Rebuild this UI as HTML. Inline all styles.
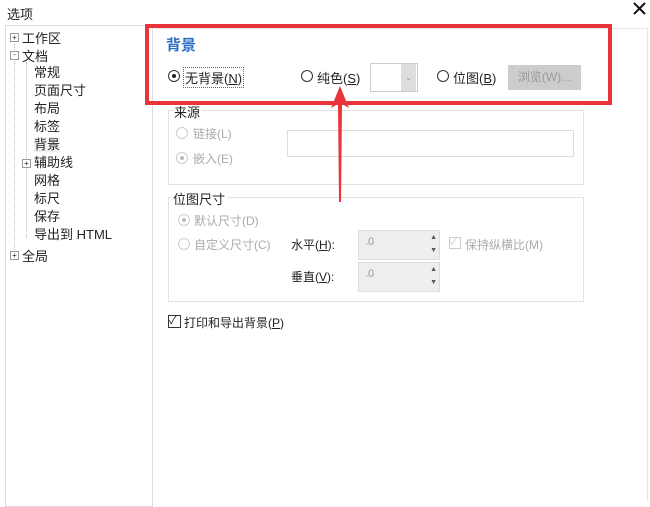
<!DOCTYPE html><html><head><meta charset="utf-8"><style>
body{margin:0;width:650px;height:500px;background:#fff;position:relative;overflow:hidden;font-family:"Liberation Sans","Noto Sans CJK SC",sans-serif;font-size:12px;color:#222}
.a{position:absolute;white-space:nowrap}
.g{color:#aaa}
.rb{position:absolute;width:10px;height:10px;border:1px solid #333;border-radius:50%;background:#fff}
.rb.d{border-color:#ccc}
.dot{position:absolute;left:3px;top:3px;width:4px;height:4px;border-radius:50%;background:#222}
.box{position:absolute;border:1px solid #e2e2e2}
.u{text-decoration:underline}
</style></head><body>
<div class="a" style="left:7px;top:4px;font-size:13px">选项</div>
<svg class="a" style="left:633px;top:2px" width="13" height="13"><path d="M1 1L12 12M12 1L1 12" stroke="#111" stroke-width="2"/></svg>
<div class="box" style="left:5px;top:25px;width:146px;height:480px;border-color:#ddd"></div>
<div class="a" style="left:152px;top:28px;width:1px;height:472px;background:#ddd"></div>
<div class="a" style="left:157px;top:28px;width:490px;height:1px;background:#e5e5e5"></div>
<div class="a" style="left:647px;top:28px;width:1px;height:472px;background:#e5e5e5"></div>
<!-- tree -->
<div class="a" style="left:14px;top:44px;width:1px;height:210px;border-left:1px dotted #bbb"></div>
<div class="a" style="left:26px;top:62px;width:1px;height:176px;border-left:1px dotted #bbb"></div>
<div class="a" style="left:10px;top:33px;width:7px;height:7px;border:1px solid #999;font-size:8px;line-height:7px;text-align:center;background:#fff">+</div>
<div class="a" style="left:22px;top:28px;font-size:13px">工作区</div>
<div class="a" style="left:10px;top:51px;width:7px;height:7px;border:1px solid #999;font-size:8px;line-height:6px;text-align:center;background:#fff">-</div>
<div class="a" style="left:22px;top:46px;font-size:13px">文档</div>
<div class="a" style="left:34px;top:64px;font-size:13px;line-height:18px">常规<br>页面尺寸<br>布局<br>标签<br><span style="background:#f0f0f0">背景</span><br>辅助线<br>网格<br>标尺<br>保存<br>导出到 HTML</div>
<div class="a" style="left:22px;top:159px;width:7px;height:7px;border:1px solid #999;font-size:8px;line-height:7px;text-align:center;background:#fff">+</div>
<div class="a" style="left:10px;top:251px;width:7px;height:7px;border:1px solid #999;font-size:8px;line-height:7px;text-align:center;background:#fff">+</div>
<div class="a" style="left:22px;top:246px;font-size:13px">全局</div>
<!-- header -->
<div class="a" style="left:166px;top:34px;font-size:15px;color:#2a6cc0;font-weight:bold">背景</div>
<div class="rb" style="left:168px;top:70px"><div class="dot"></div></div>
<div class="a" style="left:183px;top:67px;font-size:13px;border:1px dotted #666;padding:0 1px">无背景(<span class="u">N</span>)</div>
<div class="rb" style="left:301px;top:70px"></div>
<div class="a" style="left:317px;top:68px;font-size:13px">纯色(<span class="u">S</span>)</div>
<div class="a" style="left:370px;top:63px;width:46px;height:27px;border:1px solid #ccc;background:#fff"></div>
<div class="a" style="left:401px;top:64px;width:15px;height:27px;background:#ddd;color:#999;font-size:8px;text-align:center;line-height:27px">⌄</div>
<div class="rb" style="left:437px;top:70px"></div>
<div class="a" style="left:453px;top:68px;font-size:13px">位图(<span class="u">B</span>)</div>
<div class="a" style="left:508px;top:65px;width:73px;height:25px;background:#ccc;color:#999;text-align:center;line-height:25px">浏览(W)...</div>
<!-- source -->
<div class="box" style="left:168px;top:110px;width:414px;height:73px"></div>
<div class="a" style="left:174px;top:102px;background:#fff;padding-right:2px;font-size:13px">来源</div>
<div class="rb d" style="left:176px;top:127px"></div>
<div class="a g" style="left:193px;top:125px">链接(L)</div>
<div class="rb d" style="left:176px;top:152px"><div class="dot" style="background:#bbb"></div></div>
<div class="a g" style="left:193px;top:150px">嵌入(E)</div>
<div class="a" style="left:287px;top:130px;width:285px;height:25px;border:1px solid #ddd"></div>
<!-- size -->
<div class="box" style="left:168px;top:197px;width:414px;height:103px"></div>
<div class="a" style="left:173px;top:189px;background:#fff;padding-right:2px;font-size:13px">位图尺寸</div>
<div class="rb d" style="left:178px;top:214px"><div class="dot" style="background:#bbb"></div></div>
<div class="a g" style="left:194px;top:212px">默认尺寸(D)</div>
<div class="rb d" style="left:178px;top:238px"></div>
<div class="a g" style="left:194px;top:236px">自定义尺寸(C)</div>
<div class="a" style="left:291px;top:236px">水平(<span class="u">H</span>):</div>
<div class="a" style="left:291px;top:268px">垂直(<span class="u">V</span>):</div>
<div class="a" style="left:358px;top:230px;width:80px;height:28px;background:#eee;border:1px solid #ddd;color:#999;font-size:11px"><span style="position:absolute;left:6px;top:5px">.0</span><span style="position:absolute;right:2px;top:0;font-size:7px;color:#555;line-height:13px">▲<br>▼</span></div>
<div class="a" style="left:358px;top:262px;width:80px;height:28px;background:#eee;border:1px solid #ddd;color:#999;font-size:11px"><span style="position:absolute;left:6px;top:5px">.0</span><span style="position:absolute;right:2px;top:0;font-size:7px;color:#555;line-height:13px">▲<br>▼</span></div>
<div class="a" style="left:449px;top:237px;width:10px;height:10px;border:1px solid #ccc;color:#ccc;font-size:10px;line-height:10px">✓</div>
<div class="a g" style="left:465px;top:236px">保持纵横比(M)</div>
<div class="a" style="left:168px;top:315px;width:11px;height:11px;border:1px solid #333;font-size:11px;line-height:11px">✓</div>
<div class="a" style="left:184px;top:314px">打印和导出背景(<span class="u">P</span>)</div>
<!-- annotation -->
<div class="a" style="left:145px;top:24px;width:459px;height:73px;border:4px solid #e8343a"></div>
<svg class="a" style="left:325px;top:84px" width="30" height="120"><path d="M15 2L24 24L17 20L16 118L14 118L13 20L6 24Z" fill="#e8343a"/></svg>
</body></html>
